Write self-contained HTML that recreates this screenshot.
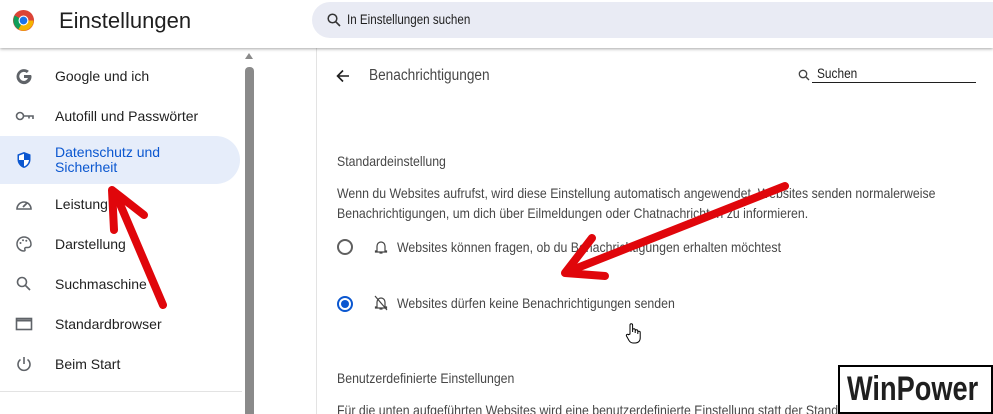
<!DOCTYPE html>
<html style="overflow:hidden"><head><meta charset="utf-8"><style>
*{margin:0;padding:0;box-sizing:border-box}
html,body{width:993px;height:414px;overflow:hidden}
body{background:#fff;font-family:"Liberation Sans",sans-serif;position:relative;color:#1f1f1f}
.hdr{position:absolute;left:0;top:0;width:993px;height:48px;background:#fff;box-shadow:0 1px 3px rgba(0,0,0,.35);z-index:3}
.title{position:absolute;left:59px;top:8px;font-size:22px;color:#1f1f1f}
.search{position:absolute;left:312px;top:2px;width:700px;height:36px;border-radius:18px;background:#e9ebf4}
.search span{position:absolute;left:35px;top:10px;font-size:13.5px;color:#1f1f1f;transform:scaleX(.86);transform-origin:left;white-space:nowrap}
.side{position:absolute;left:0;top:48px;width:316px;height:366px;overflow:hidden}
.item{position:absolute;left:0;width:240px;height:40px;font-size:14px;color:#1f1f1f}
.item span{position:absolute;left:55px;top:12px}
.item svg{position:absolute;left:15px;top:11px}
.sel{background:#e6edfa;border-radius:0 24px 24px 0;height:48px;color:#0b57d0}
.scroll{position:absolute;left:245px;top:19px;width:9px;height:360px;background:#8a8a8a;border-radius:4px}
.main{position:absolute;left:316px;top:48px;width:677px;height:366px;border-left:1px solid #e3e3e3;overflow:hidden}
.t{position:absolute;font-size:14px;color:#474747;white-space:nowrap;transform:scaleX(.88);transform-origin:left}
</style></head><body>
<div class="hdr">
<svg style="position:absolute;left:12px;top:9px" width="23" height="23" viewBox="0 0 24 24"><circle cx="12" cy="12" r="11" fill="#db4437"/><path d="M12 12 L22.5 12 A10.5 10.5 0 0 1 6.7 21.1Z" fill="#f4b400"/><path d="M12 12 L6.7 21.1 A10.5 10.5 0 0 1 2.9 6.7Z" fill="#0f9d58"/><path d="M12 12 L2.9 6.7 A10.5 10.5 0 0 1 12 1.5Z" fill="#db4437"/><circle cx="12" cy="12" r="5.2" fill="#fff"/><circle cx="12" cy="12" r="4" fill="#1a73e8"/></svg>
<div class="title">Einstellungen</div>
<div class="search"><svg style="position:absolute;left:15px;top:11px" width="14" height="14" viewBox="0 0 14 14"><circle cx="5.5" cy="5.5" r="4.3" fill="none" stroke="#333" stroke-width="1.5"/><path d="M8.7 8.7L13 13" stroke="#333" stroke-width="1.6"/></svg><span>In Einstellungen suchen</span></div>
</div>
<div class="side">
<div class="item" style="top:8px"><svg width="18" height="18" viewBox="0 0 18 18"><path d="M16 8H9v3h4a4.5 4.5 0 1 1-1.2-5l2.1-2.1A7.5 7.5 0 1 0 16.5 9z" fill="#5f6368"/></svg><span>Google und ich</span></div>
<div class="item" style="top:48px"><svg width="20" height="18" viewBox="0 0 20 18"><circle cx="5" cy="9" r="3.5" fill="none" stroke="#5f6368" stroke-width="1.6"/><path d="M8.5 9H18v3M14 9v2.5" fill="none" stroke="#5f6368" stroke-width="1.6"/></svg><span>Autofill und Passwörter</span></div>
<div class="item sel" style="top:88px"><svg style="top:15px" width="18" height="18" viewBox="0 0 18 18"><path d="M9 1L2.5 3.5v5c0 4 2.8 7.3 6.5 8.5 3.7-1.2 6.5-4.5 6.5-8.5v-5z" fill="#0b57d0"/><path d="M9 9H4V4.6L9 2.7zM9 9h5c-.4 3-2.3 5.5-5 6.5z" fill="#fff"/></svg><span style="top:9px;line-height:15px">Datenschutz und<br>Sicherheit</span></div>
<div class="item" style="top:136px"><svg width="18" height="18" viewBox="0 0 18 18"><path d="M2 14a7 7 0 1 1 14 0z" fill="none" stroke="#5f6368" stroke-width="1.6"/><path d="M8 12l4-4" stroke="#5f6368" stroke-width="1.8"/></svg><span>Leistung</span></div>
<div class="item" style="top:176px"><svg width="18" height="18" viewBox="0 0 18 18"><path d="M9 2a7 7 0 0 0 0 14c1 0 1.3-.8.9-1.5-.5-.9 0-2 1.1-2H13a3 3 0 0 0 3-3C16 5 13 2 9 2z" fill="none" stroke="#5f6368" stroke-width="1.5"/><circle cx="5.5" cy="8" r="1" fill="#5f6368"/><circle cx="8" cy="5.3" r="1" fill="#5f6368"/><circle cx="11.3" cy="5.8" r="1" fill="#5f6368"/></svg><span>Darstellung</span></div>
<div class="item" style="top:216px"><svg width="18" height="18" viewBox="0 0 18 18"><circle cx="7" cy="7" r="4.5" fill="none" stroke="#5f6368" stroke-width="1.6"/><path d="M10.3 10.3L15 15" stroke="#5f6368" stroke-width="1.7"/></svg><span>Suchmaschine</span></div>
<div class="item" style="top:256px"><svg width="18" height="18" viewBox="0 0 18 18"><rect x="1.5" y="3.5" width="15" height="11" fill="none" stroke="#5f6368" stroke-width="1.6"/><path d="M1.5 5.5h15" stroke="#5f6368" stroke-width="2"/></svg><span>Standardbrowser</span></div>
<div class="item" style="top:296px"><svg width="18" height="18" viewBox="0 0 18 18"><path d="M5.5 4.5a6 6 0 1 0 7 0" fill="none" stroke="#5f6368" stroke-width="1.6"/><path d="M9 2v7" stroke="#5f6368" stroke-width="1.6"/></svg><span>Beim Start</span></div>
<div style="position:absolute;left:0;top:343px;width:242px;height:1px;background:#e3e3e3"></div>
<div class="scroll"></div>
<div style="position:absolute;left:245px;top:5px;width:0;height:0;border-left:4.5px solid transparent;border-right:4.5px solid transparent;border-bottom:6px solid #8a8a8a"></div>
</div>
<div class="main">
<svg style="position:absolute;left:19px;top:21px" width="14" height="14" viewBox="0 0 14 14"><path d="M13 7H2M7 1.5L1.5 7 7 12.5" fill="none" stroke="#1f1f1f" stroke-width="1.6"/></svg>
<div class="t" style="left:52px;top:19px;font-size:15.5px">Benachrichtigungen</div>
<svg style="position:absolute;left:481px;top:21px" width="12" height="12" viewBox="0 0 12 12"><circle cx="5" cy="5" r="3.7" fill="none" stroke="#444" stroke-width="1.3"/><path d="M7.8 7.8L11 11" stroke="#444" stroke-width="1.4"/></svg>
<div class="t" style="left:500px;top:18px;font-size:13.5px;color:#1f1f1f">Suchen</div>
<div style="position:absolute;left:495px;top:34px;width:164px;height:1px;background:#1f1f1f"></div>
<div class="t" style="left:20px;top:105px">Standardeinstellung</div>
<div class="t" style="left:20px;top:137px">Wenn du Websites aufrufst, wird diese Einstellung automatisch angewendet. Websites senden normalerweise</div>
<div class="t" style="left:20px;top:157px">Benachrichtigungen, um dich über Eilmeldungen oder Chatnachrichten zu informieren.</div>
<div style="position:absolute;left:20px;top:191px;width:16px;height:16px;border-radius:50%;border:2px solid #5f5f5f"></div>
<svg style="position:absolute;left:57px;top:191px" width="14" height="16" viewBox="0 0 14 16"><path d="M3 12V7a4 4 0 0 1 8 0v5h1.5v1h-11v-1z M5.5 14h3" fill="none" stroke="#444" stroke-width="1.2"/></svg>
<div class="t" style="left:80px;top:191px">Websites können fragen, ob du Benachrichtigungen erhalten möchtest</div>
<div style="position:absolute;left:20px;top:248px;width:16px;height:16px;border-radius:50%;border:2px solid #0b57d0"><div style="position:absolute;left:2px;top:2px;width:8px;height:8px;border-radius:50%;background:#0b57d0"></div></div>
<svg style="position:absolute;left:57px;top:247px" width="14" height="16" viewBox="0 0 14 16"><path d="M3 12V7a4 4 0 0 1 8 0v5h1.5v1h-11v-1z M5.5 14h3 M1 1l12 14" fill="none" stroke="#444" stroke-width="1.2"/></svg>
<div class="t" style="left:80px;top:247px">Websites dürfen keine Benachrichtigungen senden</div>
<svg style="position:absolute;left:308px;top:274px" width="16" height="22" viewBox="0 0 16 22"><path d="M5 12V3a1.3 1.3 0 0 1 2.6 0v7V8a1.3 1.3 0 0 1 2.6 0v3-2a1.3 1.3 0 0 1 2.6 0v3-1.5a1.2 1.2 0 0 1 2.4 0V16c0 3-2 5-5 5H8c-2 0-3-1-4-2.5L1.5 14a1.2 1.2 0 0 1 2-1.3z" fill="#fff" stroke="#000" stroke-width="1"/></svg>
<div class="t" style="left:20px;top:322px">Benutzerdefinierte Einstellungen</div>
<div class="t" style="left:20px;top:354px">Für die unten aufgeführten Websites wird eine benutzerdefinierte Einstellung statt der Standardeinstellung</div>
</div>
<svg style="position:absolute;left:0;top:0;z-index:5" width="993" height="414">
<path d="M163 305L117 197" stroke="#e0060b" stroke-width="8" stroke-linecap="round"/>
<path d="M112 190l32 25M112 190l2 40" stroke="#e0060b" stroke-width="8" stroke-linecap="round"/>
<path d="M785 186L572 270" stroke="#e0060b" stroke-width="8" stroke-linecap="round"/>
<path d="M565 273l27-35M565 273l40 3" stroke="#e0060b" stroke-width="8" stroke-linecap="round"/>
</svg>
<div style="position:absolute;left:838px;top:365px;width:155px;height:49px;border:2px solid #000;background:#fff;z-index:6;overflow:hidden"><div style="position:absolute;left:7px;top:3px;font:bold 34px 'Liberation Sans',sans-serif;transform:scaleX(.8);transform-origin:left;white-space:nowrap">WinPower</div></div>
</body></html>
